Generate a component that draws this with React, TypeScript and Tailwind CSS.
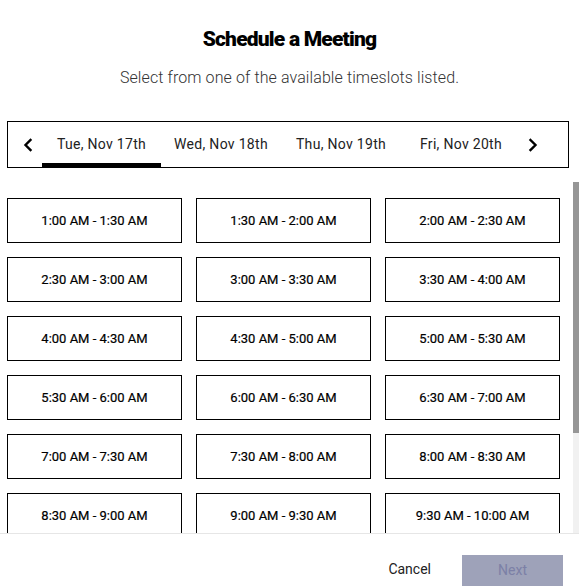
import { useState } from "react";

const days = ["Tue, Nov 17th", "Wed, Nov 18th", "Thu, Nov 19th", "Fri, Nov 20th"];

function formatTime(minutes: number) {
  const h24 = Math.floor(minutes / 60) % 24;
  const m = minutes % 60;
  const suffix = h24 < 12 ? "AM" : "PM";
  const h12 = h24 % 12 === 0 ? 12 : h24 % 12;
  return `${h12}:${m === 0 ? "00" : m} ${suffix}`;
}

const slots = Array.from({ length: 24 }, (_, i) => {
  const start = 60 + i * 30;
  return `${formatTime(start)} - ${formatTime(start + 30)}`;
});

function Chevron({ dir }: { dir: "left" | "right" }) {
  return (
    <svg width="12" height="14" viewBox="0 0 12 14" fill="none">
      <path
        d={dir === "left" ? "M8.5 2 L3.5 7 L8.5 12" : "M3.5 2 L8.5 7 L3.5 12"}
        stroke="#000"
        strokeWidth="2.4"
        strokeLinecap="square"
      />
    </svg>
  );
}

export default function App() {
  const [activeDay, setActiveDay] = useState(0);
  const [selected, setSelected] = useState<string | null>(null);

  return (
    <div className="flex h-[587px] w-[579px] flex-col overflow-hidden bg-white font-['Roboto',sans-serif] text-black">
      <h1 className="pt-[25px] text-center text-[21px] font-black leading-[28px] tracking-[-0.8px]">
        Schedule a Meeting
      </h1>
      <p className="mt-[15px] text-center text-[16px] font-light leading-[20px] tracking-[0.1px] text-[#333]">
        Select from one of the available timeslots listed.
      </p>

      <div className="mx-[7px] mt-[33px] flex h-[47px] w-[562px] items-stretch border border-black">
        <button className="flex w-[34px] items-center justify-center pl-[6px]" type="button">
          <Chevron dir="left" />
        </button>
        {days.map((day, index) => (
          <button
            key={day}
            className={
              index === activeDay
                ? "flex w-[119px] items-center justify-center border-b-[4px] border-black pt-[4px] text-[14px] tracking-[0.3px] text-[#222]"
                : "flex w-[120px] items-center justify-center border-b-[4px] border-transparent pt-[4px] text-[14px] tracking-[0.3px] text-[#222]"
            }
            onClick={() => setActiveDay(index)}
            type="button"
          >
            {day}
          </button>
        ))}
        <button className="flex w-[30px] items-center justify-center pr-[6px]" type="button">
          <Chevron dir="right" />
        </button>
      </div>

      <div className="relative mt-[14px] min-h-0 flex-1">
        <div className="h-full overflow-y-auto [scrollbar-width:none]">
          <div className="grid grid-cols-[175px_175px_175px] gap-x-[14px] gap-y-[14px] px-[7px] py-[16px]">
            {slots.map((slot) => (
              <button
                key={slot}
                className={
                  selected === slot
                    ? "flex h-[45px] items-center justify-center border border-black bg-black text-[13px] text-white"
                    : "flex h-[45px] items-center justify-center border border-black bg-white text-[13px] text-black [-webkit-text-stroke:0.2px_black]"
                }
                onClick={() => setSelected(slot)}
                type="button"
              >
                {slot}
              </button>
            ))}
          </div>
        </div>
        {/* scrollbar */}
        <div className="absolute right-0 top-0 h-full w-[6px] bg-[#f1f1f1]">
          <div className="h-[251px] w-full bg-[#969696]" />
        </div>
      </div>

      <div className="flex h-[54px] items-end justify-end gap-[26px] border-t border-[#e6e6e6] pb-px pr-[16px]">
        <button className="mb-[6px] px-[5px] text-[14px] text-[#222]" type="button">
          Cancel
        </button>
        <button
          className="h-[31px] w-[101px] bg-[#9ea2b9] text-[14px] text-[#7c80a6]"
          disabled={!selected}
          type="button"
        >
          Next
        </button>
      </div>
    </div>
  );
}
